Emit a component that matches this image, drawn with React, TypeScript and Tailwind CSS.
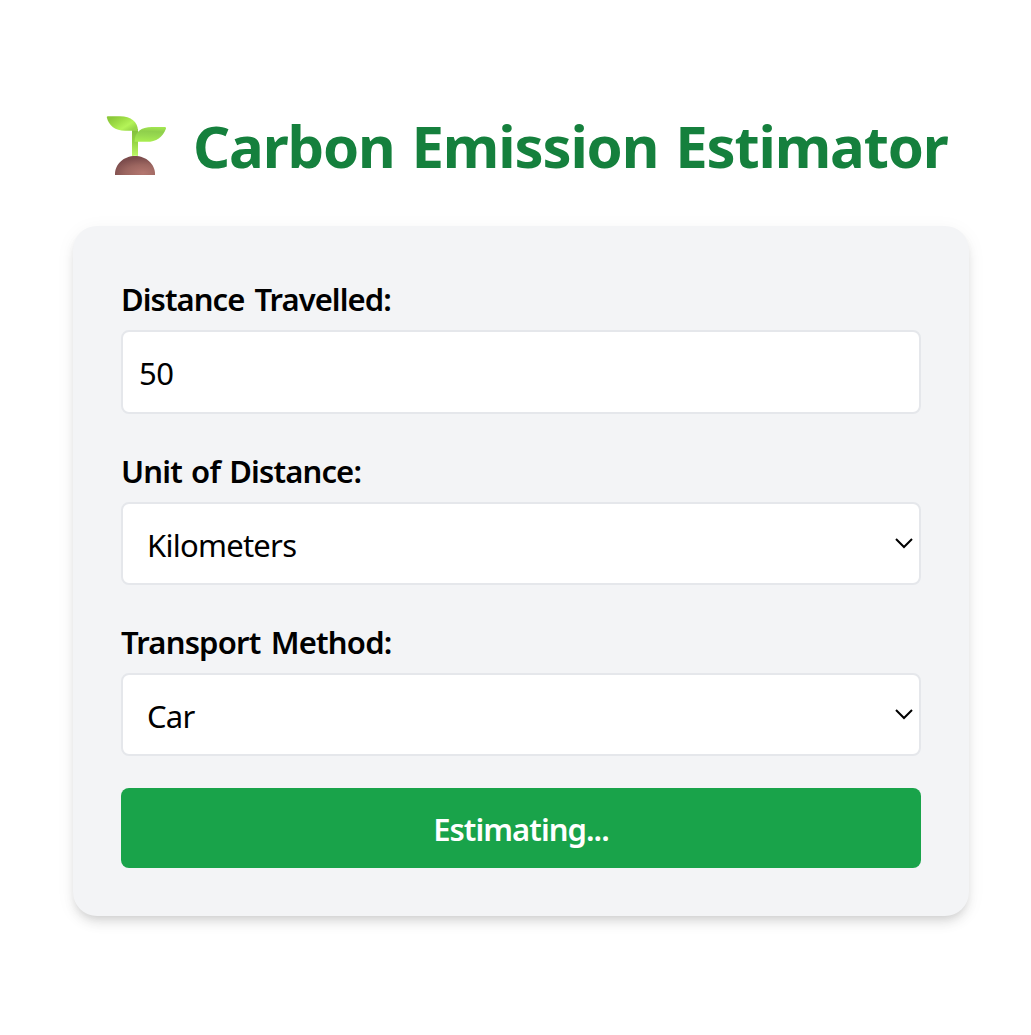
import type { ReactNode } from 'react';

function Seedling() {
  return (
    <svg width="60" height="60" viewBox="0 0 60 60" aria-hidden="true" className="shrink-0">
      <defs>
        <linearGradient id="leafLeft" x1="0.1" y1="0.2" x2="0.9" y2="0.8">
          <stop offset="0" stopColor="#8cc93a" />
          <stop offset="0.35" stopColor="#9fde46" />
          <stop offset="0.7" stopColor="#b4f458" />
          <stop offset="1" stopColor="#98d648" />
        </linearGradient>
        <linearGradient id="leafRight" x1="0.55" y1="0" x2="0.45" y2="1">
          <stop offset="0" stopColor="#a2e650" />
          <stop offset="0.3" stopColor="#8fcf4c" />
          <stop offset="0.6" stopColor="#98da50" />
          <stop offset="1" stopColor="#a9ee50" />
        </linearGradient>
        <linearGradient id="stem" x1="0" y1="0" x2="0" y2="1">
          <stop offset="0" stopColor="#80bd3c" />
          <stop offset="0.5" stopColor="#96d545" />
          <stop offset="1" stopColor="#bdf865" />
        </linearGradient>
        <radialGradient id="soil" cx="0.7" cy="0.9" r="0.8">
          <stop offset="0" stopColor="#b47770" />
          <stop offset="0.55" stopColor="#9c6660" />
          <stop offset="1" stopColor="#7c4c4c" />
        </radialGradient>
      </defs>
      <path d="M9 60C8.5 49 18 41 29 41S49.5 49 49 60Z" fill="url(#soil)" />
      <path d="M26 14H32V41Q29 40.5 26 41Z" fill="url(#stem)" />
      <path d="M0.8 2.6Q0.6 1.2 2 1.2H14C25 1.2 31.8 7 32 15.8H19C9 15.8 3 11 0.8 2.6Z" fill="url(#leafLeft)" />
      <path d="M58.6 12H46C35 12 28.6 17 28.6 26.8H41C50 26.8 57 22 60 13.4Q60.2 12 58.6 12Z" fill="url(#leafRight)" />
    </svg>
  );
}

function Chevron() {
  return (
    <svg width="20" height="12" viewBox="0 0 20 12" fill="none" stroke="#000" strokeWidth="2" aria-hidden="true" className="mb-0.5">
      <path d="M2 2L10 10L18 2" />
    </svg>
  );
}

function Field({ label, labelClass, children }: { label: string; labelClass: string; children: ReactNode }) {
  return (
    <div className="flex flex-col gap-2">
      <div className={`h-12 text-[31px] leading-[51px] font-[560] whitespace-nowrap ${labelClass}`}>{label}</div>
      {children}
    </div>
  );
}

function Select({ value, valueClass }: { value: string; valueClass: string }) {
  return (
    <div className="flex h-[83px] items-center justify-between rounded-lg border-2 border-gray-200 bg-white pr-[5px] pl-6">
      <span className={`pt-[3px] text-[31px] leading-[48px] ${valueClass}`}>{value}</span>
      <Chevron />
    </div>
  );
}

export default function App() {
  return (
    <div className="min-h-screen bg-white px-[73px] pt-[115px] font-['Noto_Sans',sans-serif] text-black">
      <h1 className="flex h-[60px] items-center pl-[33px] whitespace-nowrap">
        <Seedling />
        <span className="ml-[27px] pt-0.5 text-[58px] leading-[60px] font-bold tracking-[-1.15px] text-[#15803d] [word-spacing:3px]">
          Carbon Emission Estimator
        </span>
      </h1>
      <main className="mt-[51px] flex w-[896px] flex-col rounded-3xl bg-[#f3f4f6] p-12 shadow-[0_8px_12px_-2px_rgba(0,0,0,0.1),0_4px_8px_-4px_rgba(0,0,0,0.1),0_4px_20px_rgba(0,0,0,0.05)]">
        <div className="flex flex-col gap-8">
          <Field label="Distance Travelled:" labelClass="tracking-[-0.95px] [word-spacing:3px]">
            <div className="flex h-[84px] items-center rounded-lg border-2 border-gray-200 bg-white px-4">
              <span className="pt-0.5 text-[31px] leading-[48px] tracking-[-0.5px]">50</span>
            </div>
          </Field>
          <Field label="Unit of Distance:" labelClass="tracking-[-0.85px] [word-spacing:2px]">
            <Select value="Kilometers" valueClass="tracking-[-0.75px]" />
          </Field>
          <Field label="Transport Method:" labelClass="tracking-[-0.8px] [word-spacing:3px]">
            <Select value="Car" valueClass="tracking-[-0.75px]" />
          </Field>
          <button className="h-20 rounded-lg bg-[#19a34a] pt-0.5 text-[31px] leading-[48px] font-semibold tracking-[-0.95px] text-white">
            Estimating...
          </button>
        </div>
      </main>
    </div>
  );
}
